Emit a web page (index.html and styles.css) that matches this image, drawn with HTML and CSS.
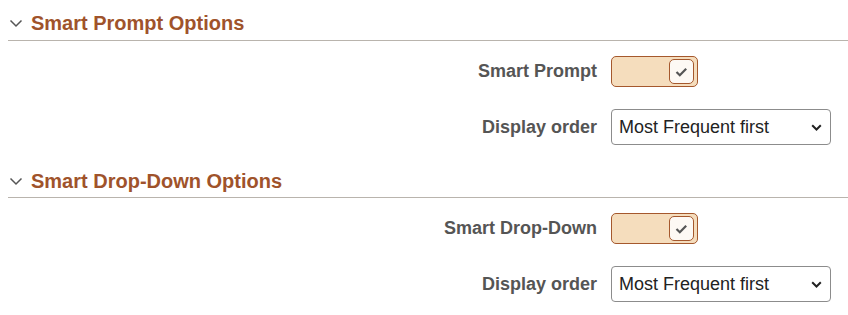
FILE: index.html
```html
<!DOCTYPE html>
<html>
<head>
<meta charset="utf-8">
<link rel="stylesheet" href="styles.css">
</head>
<body>
<div class="page">
  <section class="group">
    <div class="group-header">
      <svg class="chev" width="14" height="9" viewBox="0 0 14 9"><path d="M1.5 1.5 L7 7 L12.5 1.5" fill="none" stroke="#555" stroke-width="1.5"/></svg>
      <h2 class="group-title">Smart Prompt Options</h2>
    </div>
    <div class="rows">
      <div class="row">
        <label class="lbl">Smart Prompt</label>
        <div class="toggle">
          <span class="knob"><svg width="13" height="10" viewBox="0 0 13 10"><path d="M1.5 5 L4.8 8.2 L11.2 1.8" fill="none" stroke="#555" stroke-width="2.2"/></svg></span>
        </div>
      </div>
      <div class="row row-select">
        <label class="lbl">Display order</label>
        <div class="select">
          <span class="sel-text">Most Frequent first</span>
          <svg class="sel-chev" width="11" height="7" viewBox="0 0 11 7"><path d="M1.2 1.3 L5.5 5.5 L9.8 1.3" fill="none" stroke="#222" stroke-width="2"/></svg>
        </div>
      </div>
    </div>
  </section>
  <section class="group group2">
    <div class="group-header">
      <svg class="chev" width="14" height="9" viewBox="0 0 14 9"><path d="M1.5 1.5 L7 7 L12.5 1.5" fill="none" stroke="#555" stroke-width="1.5"/></svg>
      <h2 class="group-title">Smart Drop-Down Options</h2>
    </div>
    <div class="rows">
      <div class="row">
        <label class="lbl">Smart Drop-Down</label>
        <div class="toggle">
          <span class="knob"><svg width="13" height="10" viewBox="0 0 13 10"><path d="M1.5 5 L4.8 8.2 L11.2 1.8" fill="none" stroke="#555" stroke-width="2.2"/></svg></span>
        </div>
      </div>
      <div class="row row-select">
        <label class="lbl">Display order</label>
        <div class="select">
          <span class="sel-text">Most Frequent first</span>
          <svg class="sel-chev" width="11" height="7" viewBox="0 0 11 7"><path d="M1.2 1.3 L5.5 5.5 L9.8 1.3" fill="none" stroke="#222" stroke-width="2"/></svg>
        </div>
      </div>
    </div>
  </section>
</div>
</body>
</html>
```
FILE: styles.css
```css
html, body {
  margin: 0;
  padding: 0;
  background: #fff;
}
body {
  font-family: "Liberation Sans", Arial, sans-serif;
  padding-left: 8px;
}
.page {
  padding-top: 11px;
}
.group-header {
  display: flex;
  align-items: center;
  height: 24px;
  padding-bottom: 5px;
  border-bottom: 1px solid #b9b4ad;
}
.chev {
  margin-left: 1px;
  margin-right: 8px;
  margin-top: 1px;
}
.group-title {
  margin: 0;
  font-size: 20px;
  line-height: 24px;
  font-weight: bold;
  color: #9f532b;
}
.group2 {
  margin-top: 24px;
}
.group2 .group-header {
  padding-bottom: 4px;
}
.rows {
  padding-top: 15px;
}
.row {
  display: flex;
  align-items: center;
}
.row-select {
  margin-top: 22px;
}
.lbl {
  width: 603px;
  text-align: right;
  padding-right: 14px;
  box-sizing: border-box;
  font-size: 18px;
  font-weight: bold;
  color: #555;
}
.toggle {
  width: 87px;
  height: 31px;
  box-sizing: border-box;
  background: #f5ddbd;
  border: 1px solid #a5582d;
  border-radius: 5px;
  display: flex;
  align-items: center;
  justify-content: flex-end;
  padding-right: 3px;
}
.knob {
  width: 25px;
  height: 25px;
  box-sizing: border-box;
  background: #fdf9f4;
  border: 1px solid #a5582d;
  border-radius: 5px;
  display: flex;
  align-items: center;
  justify-content: center;
}
.select {
  width: 220px;
  height: 36px;
  box-sizing: border-box;
  border: 1px solid #8c8c8c;
  border-radius: 4px;
  display: flex;
  align-items: center;
  justify-content: space-between;
  padding: 0 8px 0 7px;
}
.sel-text {
  font-size: 18px;
  color: #222;
}
.sel-chev {
  margin-top: 1px;
}
```
